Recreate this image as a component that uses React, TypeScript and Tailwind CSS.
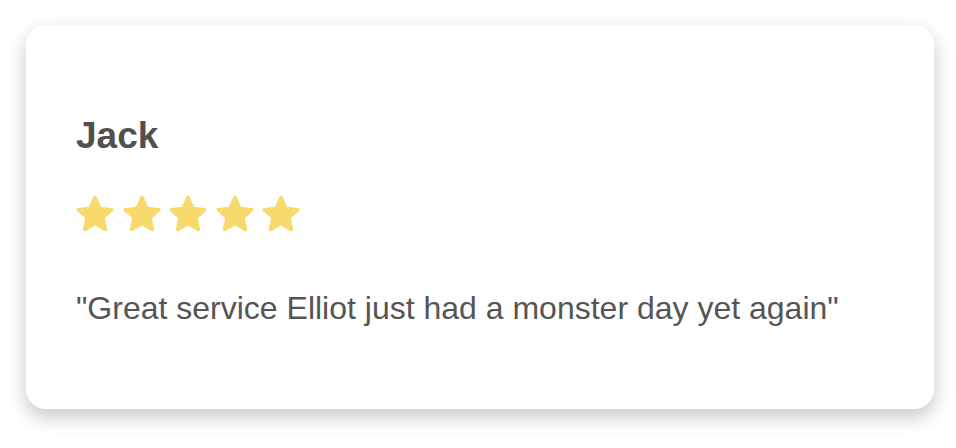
import React from "react";

function Star() {
  const cx = 19;
  const cy = 20.2;
  const R = 17.6;
  const r = R * 0.47;
  const pts: string[] = [];
  for (let i = 0; i < 10; i++) {
    const a = (-90 + i * 36) * (Math.PI / 180);
    const rad = i % 2 === 0 ? R : r;
    pts.push(`${(cx + rad * Math.cos(a)).toFixed(2)},${(cy + rad * Math.sin(a)).toFixed(2)}`);
  }
  return (
    <svg width="38" height="38" viewBox="0 0 38 38">
      <polygon
        points={pts.join(" ")}
        fill="#F8D96C"
        stroke="#F8D96C"
        strokeWidth="3.6"
        strokeLinejoin="round"
      />
    </svg>
  );
}

export default function App() {
  return (
    <div className="w-[956px] h-[448px] bg-white pl-[26px] pt-[25px]" style={{ fontFamily: '"Liberation Sans", Arial, sans-serif' }}>
      <div className="w-[908px] h-[384px] rounded-[20px] bg-white shadow-[0_8px_20px_rgba(0,0,0,0.22)] pl-[50px] pt-[92px]">
        <div className="text-[37px] leading-[37px] font-bold text-[#505050]">Jack</div>
        <div className="mt-[41px] flex gap-[8.5px]">
          <Star />
          <Star />
          <Star />
          <Star />
          <Star />
        </div>
        <p className="mt-[57px] text-[32px] leading-[36px] text-[#555555]">
          "Great service Elliot just had a monster day yet again"
        </p>
      </div>
    </div>
  );
}
